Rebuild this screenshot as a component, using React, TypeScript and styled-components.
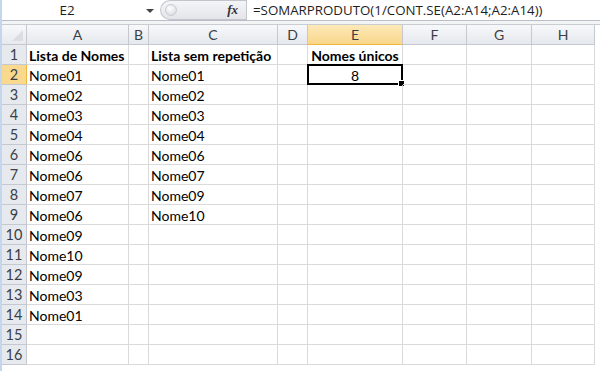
import styled, { createGlobalStyle } from "styled-components";

const GlobalStyle = createGlobalStyle`
    html, body {
        margin: 0;
        padding: 0;
        background: #ffffff;
    }
`;

const COLUMNS = ["A", "B", "C", "D", "E", "F", "G", "H"];
const COL_WIDTHS = [25, 102, 20, 129, 30, 95, 64, 65, 63];
const ACTIVE_COL = "E";
const ACTIVE_ROW = 2;

type Cell = { text: string; bold?: boolean; center?: boolean };

const data: Record<number, Record<string, Cell>> = {
    1: {
        A: { text: "Lista de Nomes", bold: true },
        C: { text: "Lista sem repetição", bold: true },
        E: { text: "Nomes únicos", bold: true, center: true },
    },
    2: { A: { text: "Nome01" }, C: { text: "Nome01" }, E: { text: "8", center: true } },
    3: { A: { text: "Nome02" }, C: { text: "Nome02" } },
    4: { A: { text: "Nome03" }, C: { text: "Nome03" } },
    5: { A: { text: "Nome04" }, C: { text: "Nome04" } },
    6: { A: { text: "Nome06" }, C: { text: "Nome06" } },
    7: { A: { text: "Nome06" }, C: { text: "Nome07" } },
    8: { A: { text: "Nome07" }, C: { text: "Nome09" } },
    9: { A: { text: "Nome06" }, C: { text: "Nome10" } },
    10: { A: { text: "Nome09" } },
    11: { A: { text: "Nome10" } },
    12: { A: { text: "Nome09" } },
    13: { A: { text: "Nome03" } },
    14: { A: { text: "Nome01" } },
};

const rows = Array.from({ length: 16 }, (_, i) => i + 1);

export default function App() {
    return (
        <>
            <GlobalStyle />
            <StyledPage>
                <StyledFormulaBar>
                    <StyledNameBox>
                        <StyledNameText>E2</StyledNameText>
                        <StyledArrow />
                    </StyledNameBox>
                    <StyledSplitter>
                        <StyledDimple />
                        <StyledFx>fx</StyledFx>
                    </StyledSplitter>
                    <StyledFormula>=SOMARPRODUTO(1/CONT.SE(A2:A14;A2:A14))</StyledFormula>
                </StyledFormulaBar>
                <StyledGap />
                <StyledSheet>
                    <StyledCorner>
                        <StyledCornerTriangle />
                    </StyledCorner>
                    {COLUMNS.map((c) => (
                        <StyledColHeader key={c} $active={c === ACTIVE_COL}>
                            {c}
                        </StyledColHeader>
                    ))}
                    {rows.map((r) => (
                        <StyledRow key={r}>
                            <StyledRowHeader $active={r === ACTIVE_ROW}>{r}</StyledRowHeader>
                            {COLUMNS.map((c) => {
                                const cell = data[r]?.[c];
                                const selected = r === ACTIVE_ROW && c === ACTIVE_COL;
                                return (
                                    <StyledCell
                                        key={c}
                                        $bold={cell?.bold}
                                        $center={cell?.center}
                                    >
                                        {cell?.text}
                                        {selected && (
                                            <StyledSelection>
                                                <StyledHandle />
                                            </StyledSelection>
                                        )}
                                    </StyledCell>
                                );
                            })}
                        </StyledRow>
                    ))}
                </StyledSheet>
            </StyledPage>
        </>
    );
}

const StyledPage = styled.div`
    width: 600px;
    height: 371px;
    overflow: hidden;
    background: #ffffff;
    border-left: 2px solid #c4d6ec;
    box-sizing: border-box;
    font-family: Lato, "Liberation Sans", sans-serif;
`;
const StyledFormulaBar = styled.div`
    display: flex;
    height: 20px;
    border-bottom: 1px solid #b9bec6;
    background: #ffffff;
`;
const StyledNameBox = styled.div`
    width: 158px;
    display: flex;
    align-items: center;
    position: relative;
`;
const StyledNameText = styled.div`
    flex: 1;
    text-align: center;
    font-family: "Open Sans", "Liberation Sans", sans-serif;
    font-size: 13.5px;
    color: #1e1e1e;
    padding-right: 14px;
`;
const StyledArrow = styled.div`
    width: 0;
    height: 0;
    border-left: 4px solid transparent;
    border-right: 4px solid transparent;
    border-top: 4px solid #444;
    margin-right: 6px;
    margin-top: 2px;
`;
const StyledSplitter = styled.div`
    width: 86px;
    display: flex;
    align-items: center;
    justify-content: space-between;
    background: linear-gradient(#f4f5f7, #e3e5e9);
    border: 1px solid #c2c6cc;
    border-right: none;
    border-radius: 10px 0 0 10px;
    box-sizing: border-box;
    padding: 0 8px 0 4px;
`;
const StyledDimple = styled.div`
    width: 10px;
    height: 10px;
    border-radius: 50%;
    background: radial-gradient(circle at 40% 35%, #ffffff, #cfd3d9);
    border: 1px solid #c8ccd2;
`;
const StyledFx = styled.span`
    font-family: "Liberation Serif", serif;
    font-style: italic;
    font-weight: bold;
    font-size: 13px;
    color: #333;
`;
const StyledFormula = styled.div`
    flex: 1;
    border-left: 1px solid #c2c6cc;
    padding-left: 6px;
    display: flex;
    align-items: center;
    font-family: "Open Sans", "Liberation Sans", sans-serif;
    font-size: 13.3px;
    color: #1e1e1e;
    white-space: nowrap;
`;
const StyledGap = styled.div`
    height: 3px;
    background: #f3f4f6;
    border-bottom: 1px solid #c9ccd1;
`;
const StyledSheet = styled.div`
    display: grid;
    grid-template-columns: ${COL_WIDTHS.map((w) => `${w}px`).join(" ")};
    grid-auto-rows: 20px;
`;
const StyledRow = styled.div`
    display: contents;
`;
const headerBase = `
    box-sizing: border-box;
    display: flex;
    align-items: center;
    justify-content: center;
    font-size: 14px;
    color: #3a3f47;
    border-right: 1px solid #c5c9cf;
    border-bottom: 1px solid #c5c9cf;
`;
const StyledCorner = styled.div`
    ${headerBase}
    background: linear-gradient(#f7f8fa, #e6e9ee);
    position: relative;
`;
const StyledCornerTriangle = styled.div`
    position: absolute;
    right: 3px;
    bottom: 3px;
    width: 0;
    height: 0;
    border-left: 11px solid transparent;
    border-bottom: 11px solid #dadde2;
`;
const StyledColHeader = styled.div<{ $active?: boolean }>`
    ${headerBase}
    background: ${(p) =>
        p.$active
            ? "linear-gradient(#fde9b8, #f9d68a)"
            : "linear-gradient(#f7f8fa, #e5e8ed)"};
    border-bottom-color: ${(p) => (p.$active ? "#f0b73e" : "#c5c9cf")};
`;
const StyledRowHeader = styled.div<{ $active?: boolean }>`
    ${headerBase}
    background: ${(p) => (p.$active ? "#f9d98d" : "#e6e9ee")};
    border-right-color: ${(p) => (p.$active ? "#f0b73e" : "#c5c9cf")};
    font-size: 14.5px;
`;
const StyledCell = styled.div<{ $bold?: boolean; $center?: boolean }>`
    box-sizing: border-box;
    position: relative;
    display: flex;
    align-items: center;
    justify-content: ${(p) => (p.$center ? "center" : "flex-start")};
    padding-left: ${(p) => (p.$center ? "0" : "2px")};
    padding-top: 1px;
    border-right: 1px solid #dadada;
    border-bottom: 1px solid #dadada;
    font-size: 14px;
    font-weight: ${(p) => (p.$bold ? 700 : 400)};
    color: #000;
    white-space: nowrap;
`;
const StyledSelection = styled.div`
    position: absolute;
    left: -1px;
    top: -1px;
    right: -1px;
    bottom: -1px;
    border: 2px solid #000;
    pointer-events: none;
`;
const StyledHandle = styled.div`
    position: absolute;
    right: -4px;
    bottom: -4px;
    width: 5px;
    height: 5px;
    background: #000;
    border: 1px solid #fff;
`;
